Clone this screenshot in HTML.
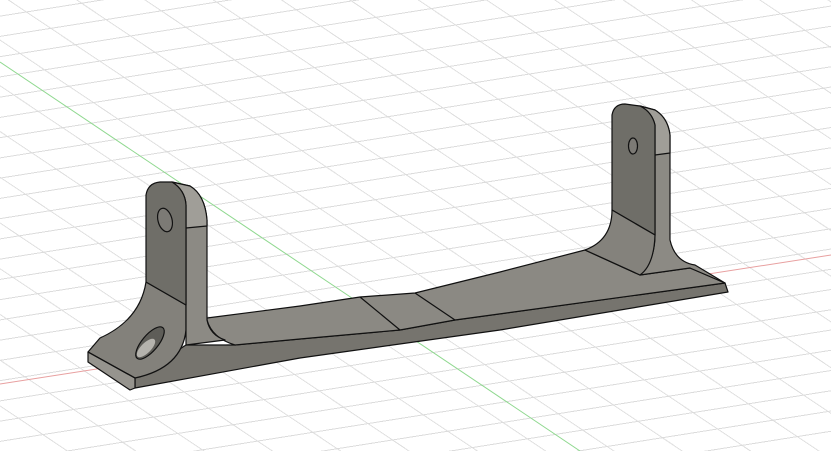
<!DOCTYPE html><html><head><style>
html,body{margin:0;padding:0}
body{width:831px;height:451px;overflow:hidden;background:#fff;position:relative}
.g{position:absolute;inset:0;background:
repeating-linear-gradient(351deg,transparent 0 19px,#dcdcdc 19px 20px),
repeating-linear-gradient(33.8deg,transparent 0 37px,#e0e0e0 37px 38px)}
svg{position:absolute;left:0;top:0}
</style></head><body><div class="g"></div>
<svg width="831" height="451" viewBox="0 0 831 451">
<line x1="0" y1="62" x2="580" y2="451" stroke="#8fd88f" stroke-width="1"/>
<line x1="0" y1="384" x2="831" y2="255" stroke="#e8a0a0" stroke-width="1"/>
<g stroke="#111" stroke-width="1.2" stroke-linejoin="round">
<!-- bar front face -->
<path d="M186,345 L235,345 L300,339 L400,330 L455,320 L725,283 L728,292 L500,330 L300,358 L135,388 L135,378 Z" fill="#76746e"/>
<!-- bar top surface -->
<path d="M207,318 L300,306 L360,297 L415,293 L500,272 L585,250 L640,275 L690,268 L725,283 L455,320 L400,330 L300,339 L235,345 Q212,338 207,320 Z" fill="#8b8983"/>
<path d="M360,297 L400,330 M415,293 L455,320 M585,250 L640,275" fill="none"/>
<!-- left foot -->
<path d="M146,282 Q140,320 100,338 L88,352 L135,378 Q182,368 186,330 L186,300 Z" fill="#83817b"/>
<path d="M88,352 L88,362 L130,390 L135,388 L135,378 Z" fill="#96948e"/>
<path d="M146,282 L186,305" fill="none"/>
<path d="M88,352 L135,378" fill="none"/>
<ellipse cx="150" cy="343" rx="8" ry="20" transform="rotate(40 150 343)" fill="#5e5d58"/>
<ellipse cx="146" cy="348" rx="5" ry="12" transform="rotate(45 146 348)" fill="#b5b3ad" stroke="none"/>
<!-- left upright side -->
<path d="M172,182 L190,186 Q205,195 207,220 L207,320 Q210,335 225,340 L186,345 L186,205 Q185,190 172,182 Z" fill="#8c8a84"/>
<path d="M172,182 Q185,190 186,205 L186,228 L207,226 L207,220 Q205,195 190,186 Z" fill="#a09e98"/>
<!-- left upright front -->
<path d="M146,195 Q148,183 160,182 L172,182 Q185,190 186,205 L186,305 L146,282 Z" fill="#6f6e68"/>
<ellipse cx="165" cy="220" rx="7" ry="12" transform="rotate(-15 165 220)" fill="#7c7a75"/>
<!-- right upright side -->
<path d="M640,106 L655,110 Q668,118 670,135 L670,240 Q675,262 695,265 L725,283 L690,268 L640,275 Q655,260 655,235 L655,125 Q652,112 640,106 Z" fill="#8c8a84"/>
<path d="M640,106 L655,110 Q668,118 670,135 L670,153 L655,155 L655,125 Q652,112 640,106 Z" fill="#a09e98"/>
<!-- right upright front -->
<path d="M612,115 Q614,104 625,104 L640,106 Q652,112 655,125 L655,235 L612,210 Z" fill="#6f6e68"/>
<path d="M612,210 L655,235 Q654,265 640,275 L585,250 Q612,240 612,210 Z" fill="#84827c"/>
<ellipse cx="633" cy="146" rx="4.5" ry="8" fill="#7c7a75"/>
</g>
</svg></body></html>
